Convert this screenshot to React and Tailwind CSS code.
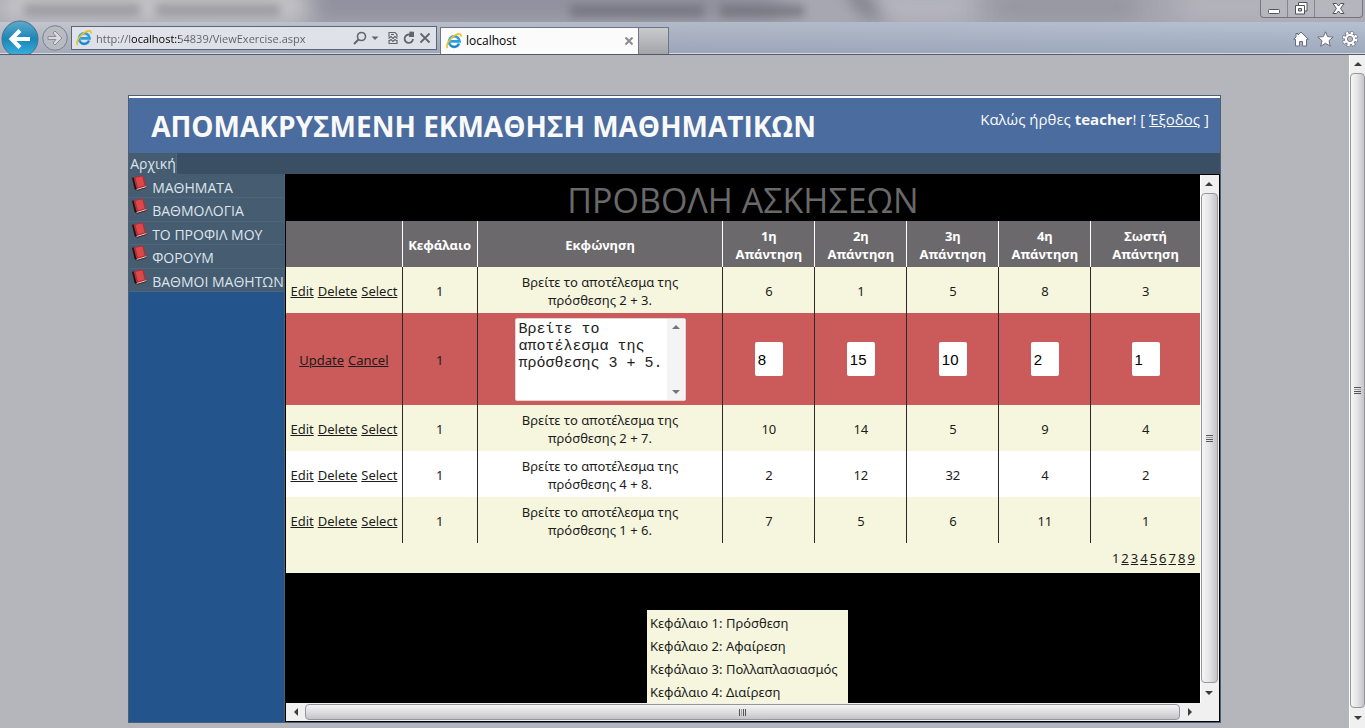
import React from "react";

const menuItems = ["ΜΑΘΗΜΑΤΑ", "ΒΑΘΜΟΛΟΓΙΑ", "ΤΟ ΠΡΟΦΙΛ ΜΟΥ", "ΦΟΡΟΥΜ", "ΒΑΘΜΟΙ ΜΑΘΗΤΩΝ"];

const answerHeads = ["1η", "2η", "3η", "4η", "Σωστή"];

const exercises = [
  { id: 1, chapter: 1, first: "Βρείτε το αποτέλεσμα της", second: "πρόσθεσης 2 + 3.", answers: [6, 1, 5, 8, 3] },
  { id: 2, chapter: 1, first: "Βρείτε το αποτέλεσμα της", second: "πρόσθεσης 3 + 5.", answers: [8, 15, 10, 2, 1], editing: true },
  { id: 3, chapter: 1, first: "Βρείτε το αποτέλεσμα της", second: "πρόσθεσης 2 + 7.", answers: [10, 14, 5, 9, 4] },
  { id: 4, chapter: 1, first: "Βρείτε το αποτέλεσμα της", second: "πρόσθεσης 4 + 8.", answers: [2, 12, 32, 4, 2], white: true },
  { id: 5, chapter: 1, first: "Βρείτε το αποτέλεσμα της", second: "πρόσθεσης 1 + 6.", answers: [7, 5, 6, 11, 1] },
];

const chapters = ["Πρόσθεση", "Αφαίρεση", "Πολλαπλασιασμός", "Διαίρεση"];

const IeIcon = () => (
  <svg viewBox="0 0 16 16" className="size-4 shrink-0">
    <path d="M13.2 10.6A5.3 5.3 0 1 1 13.6 8.4H4.6" fill="none" stroke="#2f9fd8" strokeWidth="2.6" />
    <path d="M12.6 11.4A5.3 5.3 0 0 1 4 12.2" fill="none" stroke="#1d6fb5" strokeWidth="1" />
    <path d="M1.6 15C-.6 12 4 4.6 9 2.2C12.5.4 15.6.2 14.9 3.6" fill="none" stroke="#ecbf22" strokeWidth="1.6" />
  </svg>
);

const BookIcon = () => (
  <svg viewBox="0 0 16 16" className="size-4 shrink-0">
    <path d="M0 3L2.5 2L5.5 13.5L4.5 15.5L2.6 14Z" fill="#1b1313" />
    <path d="M1.5 2.3L10.5.6L11.5 1.3L14.2 11.6L5.5 14.2L4.3 13.2Z" fill="#b52c33" />
    <path d="M3.5 2.8L10.3 1.5L12.6 10.5L6 12.3Z" fill="#d9494b" />
    <path d="M4.6 14.6L14.2 11.7" stroke="#e9dcd8" strokeWidth="1" />
    <path d="M5 15.4L14.4 12.6" stroke="#4d1518" strokeWidth=".8" />
  </svg>
);

const Arrow = ({ d }) => (
  <svg viewBox="0 0 8 8" className="size-2">
    <path d={d} fill="#3c3c3c" />
  </svg>
);

const VerticalBar = ({ inner }) => (
  <div className={(inner ? "w-[19px] pr-px" : "w-4") + " flex shrink-0 flex-col border-l border-white bg-[#f0f0f1]"}>
    <button aria-label="Up" className="flex h-[18px] items-center justify-center">
      <Arrow d="M0 6L4 2L8 6Z" />
    </button>
    <div className="flex flex-1 flex-col items-center justify-center gap-px rounded-sm border border-[#97979b] bg-linear-to-r from-[#f6f6f6] via-[#e4e4e6] to-[#c3c3c9]">
      <span className="h-px w-[7px] bg-[#55555a]" />
      <span className="h-px w-[7px] bg-[#a0a0a5]" />
      <span className="h-px w-[7px] bg-[#55555a]" />
      <span className="h-px w-[7px] bg-[#55555a]" />
    </div>
    <button aria-label="Down" className="flex h-5 items-center justify-center">
      <Arrow d="M0 2L8 2L4 6Z" />
    </button>
  </div>
);

const HorizontalBar = () => (
  <div className="flex h-[18px] shrink-0 bg-[#f0f0f1] pr-[19px]">
    <button aria-label="Left" className="flex w-[19px] items-center justify-center">
      <Arrow d="M6 0L6 8L2 4Z" />
    </button>
    <div className="my-px flex flex-1 items-center justify-center gap-px rounded-sm border border-[#97979b] bg-linear-to-b from-[#f4f4f4] via-[#dedee0] to-[#c3c3c9]">
      <span className="h-[7px] w-px bg-[#55555a]" />
      <span className="h-[7px] w-px bg-[#a0a0a5]" />
      <span className="h-[7px] w-px bg-[#55555a]" />
      <span className="h-[7px] w-px bg-[#55555a]" />
    </div>
    <button aria-label="Right" className="flex w-5 items-center justify-center">
      <Arrow d="M2 0L6 4L2 8Z" />
    </button>
  </div>
);

const BrowserBar = () => (
  <header className="relative flex h-[55px] shrink-0 items-end overflow-hidden border-b border-[#55586a] bg-[#a7a7b1]">
    {/* glass frame */}
    <div className="absolute -top-4 left-[300px] h-9 w-[480px] bg-[#858594]/70 blur-md" />
    <div className="absolute -top-2 left-0 h-7 w-[310px] bg-[#d3d2d3]/80 blur-md" />
    <div className="absolute -top-2 left-[880px] h-7 w-[90px] bg-[#bdbcc4]/80 blur-md" />
    <div className="absolute -top-2 left-[990px] h-7 w-[150px] bg-[#8c8b98]/70 blur-md" />
    <div className="absolute -top-2 left-[1180px] h-7 w-[185px] bg-[#bab9c0]/80 blur-md" />
    <div className="absolute -top-4 left-[850px] h-9 w-6 skew-x-[30deg] bg-[#74747f]/60 blur-sm" />
    <div className="absolute top-[4px] left-[24px] h-3 w-[116px] bg-[#77777f]/50 blur-xs" />
    <div className="absolute top-[4px] left-[156px] h-3 w-[124px] bg-[#77777f]/50 blur-xs" />
    <div className="absolute top-[5px] left-[570px] h-3 w-[134px] bg-[#66666f]/60 blur-xs" />
    <div className="absolute top-[5px] left-[720px] h-3 w-[84px] bg-[#66666f]/60 blur-xs" />
    <div className="absolute inset-x-0 top-[22px] bottom-0 bg-linear-to-r from-[#c3c6cd] via-[#b2b9c8] to-[#b5c1d1]" />
    <div className="absolute inset-x-0 top-[22px] bottom-0 bg-linear-to-b from-transparent to-[#8d98ad]/60" />
    <div className="absolute inset-x-0 bottom-0 h-px bg-[#d5dae3]" />

    <div className="relative flex w-full items-end">
      <button aria-label="Back" className="-mb-1 ml-px size-[38px] shrink-0">
        <svg viewBox="0 0 38 38" className="size-[38px]">
          <defs>
            <linearGradient id="back" x1="0" y1="0" x2="0" y2="1">
              <stop offset="0" stopColor="#5fa9cc" />
              <stop offset=".5" stopColor="#1b86b8" />
              <stop offset="1" stopColor="#39b5e2" />
            </linearGradient>
          </defs>
          <circle cx="19" cy="19" r="18" fill="url(#back)" stroke="#4c6f86" />
          <path d="M29 19H11M19 10.5L10.5 19L19 27.5" fill="none" stroke="#fff" strokeWidth="4" />
        </svg>
      </button>
      <button aria-label="Forward" className="mb-[3px] ml-[3px] size-[26px] shrink-0">
        <svg viewBox="0 0 26 26" className="size-[26px]">
          <circle cx="13" cy="13" r="12.3" fill="#b9bbc3" stroke="#7d7f8a" />
          <path d="M6 11.5H14L11 8L13 6L20 13L13 20L11 18L14 14.5H6Z" fill="#d9dade" stroke="#8a8c96" />
        </svg>
      </button>
      <div className="mb-1 ml-[3px] flex h-6 w-[366px] items-center border border-[#5d6476] bg-[#e4e7ec]/90 pr-[5px] pl-1">
        <IeIcon />
        <input
          aria-label="Address"
          defaultValue="http://localhost:54839/ViewExercise.aspx"
          className="ml-1 block min-w-0 flex-1 bg-[linear-gradient(90deg,#5c5f66_35px,#000_35px,#000_83px,#5c5f66_83px)] bg-clip-text pt-px text-[11px] leading-5 text-transparent outline-none"
        />
        <div className="flex items-center gap-1 text-[#62656c]">
          <svg viewBox="0 0 14 14" className="size-[14px]">
            <circle cx="8.5" cy="5.5" r="4" fill="none" stroke="currentColor" strokeWidth="1.6" />
            <path d="M5.5 8.5L1 13" stroke="currentColor" strokeWidth="2" />
          </svg>
          <svg viewBox="0 0 8 8" className="size-2">
            <path d="M.5 2.5H7.5L4 6Z" fill="currentColor" />
          </svg>
          <svg viewBox="0 0 12 14" className="ml-1 h-[14px] w-3" fill="none" stroke="currentColor" strokeWidth="1.1">
            <path d="M2 6V1.5H8L10 3.5V6M2 9V12.5H10V9" />
            <path d="M1.5 7.5L4 5.5L6 7.5L8 5.5L10.5 7.5M2 10L4 8.5L6 10.5L8 8.5L10 10" />
            <path d="M4 3.5H7" />
          </svg>
          <svg viewBox="0 0 12 14" className="h-[14px] w-3" fill="none" stroke="currentColor" strokeWidth="1.8">
            <path d="M10 8A4.2 4.2 0 1 1 7 3.7" />
            <path d="M6.5.5L11 .8V6H6Z" fill="currentColor" stroke="none" />
          </svg>
          <svg viewBox="0 0 12 12" className="size-3" stroke="currentColor" strokeWidth="1.8">
            <path d="M1.5 1.5L10.5 10.5M10.5 1.5L1.5 10.5" />
          </svg>
        </div>
      </div>
      <div className="ml-[3px] flex h-[27px] w-[199px] items-center border border-b-0 border-[#70748a] bg-[#fbfbfc] px-[5px]">
        <IeIcon />
        <span className="ml-1 flex-1 text-[12px] leading-5 text-black">localhost</span>
        <svg viewBox="0 0 8 8" className="size-2" stroke="#8b8b8f" strokeWidth="2">
          <path d="M.5.5L7.5 7.5M7.5.5L.5 7.5" />
        </svg>
      </div>
      <button aria-label="New tab" className="h-[27px] w-[30px] border border-b-0 border-l-0 border-[#70748a] bg-linear-to-b from-[#c9cacc] to-[#a4a5a9]" />
      <div className="mb-[7px] ml-auto flex items-center gap-2 pr-[7px]">
        <svg viewBox="0 0 16 16" className="size-4" fill="#fff" stroke="#696e7b">
          <path d="M8 1L15.3 8.3H13.5V15H9.5V10.5H6.5V15H2.5V8.3H.7L3 6V2.5H5V4Z" />
        </svg>
        <svg viewBox="0 0 17 16" className="h-4 w-[17px]" fill="#fff" stroke="#696e7b">
          <path d="M8.5.8L10.6 5.6L16.2 6.1L12 9.7L13.3 15.2L8.5 12.3L3.7 15.2L5 9.7L.8 6.1L6.4 5.6Z" />
        </svg>
        <svg viewBox="0 0 16 16" className="size-4">
          <circle cx="8" cy="8" r="6.2" fill="none" stroke="#696e7b" strokeWidth="3.6" strokeDasharray="3.4 1.47" strokeDashoffset=".5" />
          <circle cx="8" cy="8" r="5.2" fill="none" stroke="#696e7b" strokeWidth="2" />
          <circle cx="8" cy="8" r="6.2" fill="none" stroke="#fff" strokeWidth="2.4" strokeDasharray="2.4 2.47" />
          <circle cx="8" cy="8" r="4" fill="#b5bac4" stroke="#fff" strokeWidth="2.5" />
          <circle cx="8" cy="8" r="2.6" fill="none" stroke="#696e7b" strokeWidth=".8" />
        </svg>
      </div>
    </div>

    <div className="absolute top-0 right-[2px] flex h-[18px] w-[103px] rounded-b border border-t-0 border-[#74767f] bg-[#b8bac0]/60">
      <button aria-label="Minimize" className="flex w-[27px] items-center justify-center border-r border-[#85878f]">
        <svg viewBox="0 0 13 12" className="h-3 w-[13px]">
          <rect x=".5" y="6.5" width="11" height="4" rx="1" fill="#fff" stroke="#51535c" />
        </svg>
      </button>
      <button aria-label="Restore" className="flex w-[27px] items-center justify-center border-r border-[#85878f]">
        <svg viewBox="0 0 13 13" className="size-[13px]" fill="#fff" stroke="#51535c">
          <path d="M3.5.5H12V9H3.5Z" />
          <path d="M.5 3.5H9.5V12H.5Z" />
          <path d="M3.5 6.5H6.5V9H3.5Z" fill="#b8bac0" />
        </svg>
      </button>
      <button aria-label="Close" className="flex flex-1 items-center justify-center">
        <svg viewBox="0 0 13 11" className="h-[11px] w-[13px]">
          <path d="M1 .5H4.5L6.5 3L8.5.5H12L8.6 5.5L12 10.5H8.5L6.5 8L4.5 10.5H1L4.4 5.5Z" fill="#fff" stroke="#51535c" />
        </svg>
      </button>
    </div>
  </header>
);

const EditBox = ({ row }) => (
  <div className="mx-auto flex h-[83px] w-[171px] rounded-xs border border-[#e0d4d4] bg-white">
    <textarea
      aria-label="Εκφώνηση"
      defaultValue={row.first + " " + row.second}
      className="block min-w-0 flex-1 resize-none overflow-hidden pt-[2px] pl-[3px] font-['Liberation_Mono',monospace] text-[15px] leading-[17px] text-[#222] outline-none"
    />
    <div className="flex w-[18px] flex-col items-center justify-between bg-[#f0f0f0] py-1 opacity-70">
      <Arrow d="M0 6L4 2L8 6Z" />
      <Arrow d="M0 2L8 2L4 6Z" />
    </div>
  </div>
);

const ExerciseTable = () => (
  <table className="w-full table-fixed border-collapse text-center font-['Noto_Sans',sans-serif] text-[13px] leading-[18px] text-[#1c1c1c]">
    <colgroup>
      <col className="w-[116px]" />
      <col className="w-[75px]" />
      <col />
      <col className="w-[92px]" />
      <col className="w-[92px]" />
      <col className="w-[92px]" />
      <col className="w-[92px]" />
      <col className="w-[109px]" />
    </colgroup>
    <thead>
      <tr className="h-[46px] bg-[#6b696b] font-bold text-white">
        <th className="border-r border-white" />
        <th className="border-r border-white pt-[2px]">Κεφάλαιο</th>
        <th className="border-r border-white pt-[2px]">Εκφώνηση</th>
        {answerHeads.map((head) => (
          <th key={head} className="border-r border-white pt-[2px] last:border-r-0">
            {head}
            <br />
            Απάντηση
          </th>
        ))}
      </tr>
    </thead>
    <tbody>
      {exercises.map((row) => (
        <tr
          key={row.id}
          className={row.editing ? "h-[92px] bg-[#cb5b5a]" : row.white ? "h-[46px] bg-white" : "h-[46px] bg-[#f6f6de]"}
        >
          <td className="border-r border-[#2a2a2a] pt-[2px]">
            <div className="flex justify-center gap-1">
              {(row.editing ? ["Update", "Cancel"] : ["Edit", "Delete", "Select"]).map((action) => (
                <a key={action} href="#" className="underline">{action}</a>
              ))}
            </div>
          </td>
          <td className="border-r border-[#2a2a2a] pt-[2px]">{row.chapter}</td>
          <td className={row.editing ? "border-r border-[#2a2a2a]" : "border-r border-[#2a2a2a] pt-[2px]"}>
            {row.editing ? (
              <EditBox row={row} />
            ) : (
              <>
                {row.first}
                <br />
                {row.second}
              </>
            )}
          </td>
          {row.answers.map((answer, i) => (
            <td
              key={i}
              className={row.editing ? "border-r border-[#2a2a2a] last:border-r-0" : "border-r border-[#2a2a2a] pt-[2px] last:border-r-0"}
            >
              {row.editing ? (
                <input
                  aria-label={answerHeads[i] + " Απάντηση"}
                  defaultValue={answer}
                  className="mx-auto block h-[34px] w-7 rounded-xs bg-white pl-[3px] font-['Liberation_Sans',sans-serif] text-[15px] text-black outline-none"
                />
              ) : (
                answer
              )}
            </td>
          ))}
        </tr>
      ))}
    </tbody>
  </table>
);

const ViewExercise = () => {
  return (
    <div className="flex h-screen flex-col overflow-hidden bg-[#b4b6bc] font-['Open_Sans','Noto_Sans',sans-serif]">
      <BrowserBar />
      <div className="flex min-h-0 flex-1">
        <main className="flex min-w-0 flex-1 flex-col pt-10 pb-[5px]">
          <div className="mx-auto flex min-h-0 w-[81%] flex-1 flex-col border border-[#496077] bg-[#4b6c9e]">
            <div className="flex h-[57px] shrink-0 justify-between border-t-2 border-white pr-[11px] pl-[22px] text-[#f9f9f9]">
              <h1 className="pt-2 text-[28px] leading-10 font-bold whitespace-nowrap">ΑΠΟΜΑΚΡΥΣΜΕΝΗ ΕΚΜΑΘΗΣΗ ΜΑΘΗΜΑΤΙΚΩΝ</h1>
              <p className="pt-[11px] text-[15px] leading-5 whitespace-nowrap">
                Καλώς ήρθες <b>teacher</b>! [ <a href="#" className="underline">Έξοδος</a> ]
              </p>
            </div>
            <nav className="flex h-[21px] shrink-0 bg-[#3a4f63] text-[14px] leading-[21px] text-[#dde4ec]">
              <a href="#" className="border-r border-[#4e667d] bg-[#465c71] pl-px">Αρχική</a>
            </nav>
            <div className="flex min-h-0 flex-1">
              <aside className="w-[156px] shrink-0 border-r border-[#496077] bg-[#24548c]">
                <ul className="flex h-[118px] flex-col bg-[#465c71] pt-px text-[14px] text-[#dde4ec]">
                  {menuItems.map((item) => (
                    <li key={item} className="min-h-0 flex-1 border-b border-[#4e667d]">
                      <a href="#" className="flex gap-1 pl-[3px] leading-[25px] whitespace-nowrap">
                        <BookIcon />
                        {item}
                      </a>
                    </li>
                  ))}
                </ul>
              </aside>
              <section className="flex min-w-0 flex-1 flex-col border border-black bg-black">
                <div className="flex min-h-0 flex-1">
                  <div className="min-w-0 flex-1 overflow-hidden">
                    <h2 className="h-[46px] text-center text-[34px] leading-[50px] text-[#696969]">ΠΡΟΒΟΛΗ ΑΣΚΗΣΕΩΝ</h2>
                    <ExerciseTable />
                    <div className="flex h-[30px] items-center justify-end gap-[2px] bg-[#f6f6de] pt-[2px] pr-[5px] font-['Noto_Sans',sans-serif] text-[13px] text-[#1c1c1c]">
                      <span>1</span>
                      {[2, 3, 4, 5, 6, 7, 8, 9].map((page) => (
                        <a key={page} href="#" className="underline">{page}</a>
                      ))}
                    </div>
                    <div className="pt-[37px] pl-[9px]">
                      <ul className="mx-auto w-[201px] bg-[#f6f6de] py-[2px] pl-[3px] font-['Noto_Sans',sans-serif] text-[13px] leading-[23px] whitespace-nowrap text-[#1c1c1c]">
                        {chapters.map((name, i) => (
                          <li key={name}>Κεφάλαιο {i + 1}: {name}</li>
                        ))}
                      </ul>
                    </div>
                  </div>
                  <VerticalBar inner />
                </div>
                <HorizontalBar />
              </section>
            </div>
          </div>
        </main>
        <VerticalBar />
      </div>
    </div>
  );
};

export default ViewExercise;
